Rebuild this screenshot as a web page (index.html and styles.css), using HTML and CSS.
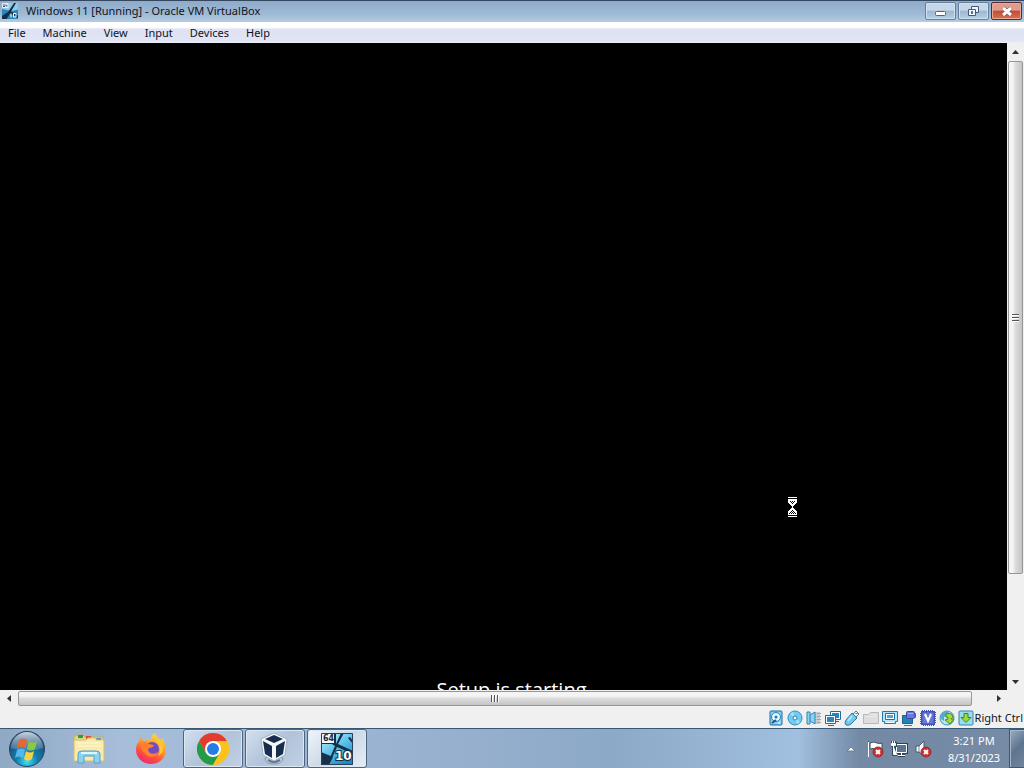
FILE: index.html
```html
<!DOCTYPE html>
<html lang="en">
<head>
    <meta charset="UTF-8">
    <meta name="viewport" content="width=device-width, initial-scale=1.0">
    <title>Windows 11 [Running] - Oracle VM VirtualBox</title>
    <link rel="stylesheet" href="styles.css">
</head>
<body>
    <header class="titlebar">
        <svg class="app-icon" viewBox="0 0 32 32">
            <rect width="32" height="32" fill="#2a87b8"/>
            <path d="M13 0h19v13L20 16 0 12V8z" fill="#8ccde9"/>
            <path d="M0 26 12 18 24 0h4L18 17l14 8v5L16 21 9 32H0z" fill="#172f45"/>
            <rect width="13" height="10" fill="#e8edf2"/>
            <path d="M2 4h4M2 7h4M8 3v3h3" stroke="#456" stroke-width="2" fill="none"/>
            <path d="M18 21v8M23 21h5v7h-5z" stroke="#fff" stroke-width="2" fill="none"/>
        </svg>
        <h1>Windows 11 [Running] - Oracle VM VirtualBox</h1>
        <div class="window-buttons">
            <button aria-label="Minimize">
                <svg width="30" height="16" viewBox="0 0 30 16"><rect x="9.500" y="8.500" width="10" height="4" rx="1" fill="#fff" stroke="#536580"/></svg>
            </button>
            <button aria-label="Restore">
                <svg width="30" height="16" viewBox="0 0 30 16"><g fill="#edf4fb" stroke="#465978"><path d="M12.500 3.500h7v6h-7z"/><path d="M9.500 6.500h7v6h-7z"/><path d="M12.500 8.500h1v2h-1z"/></g></svg>
            </button>
            <button class="close" aria-label="Close">
                <svg width="30" height="16" viewBox="0 0 30 16"><path d="m11 5 8 7m0-7-8 7" stroke="#643b40" stroke-width="4"/><path d="m11 5 8 7m0-7-8 7" stroke="#fff" stroke-width="3"/></svg>
            </button>
        </div>
    </header>

    <nav class="menubar">
        <button>File</button>
        <button>Machine</button>
        <button>View</button>
        <button>Input</button>
        <button>Devices</button>
        <button>Help</button>
    </nav>

    <main class="viewer">
        <div class="guest">
            <p class="guest-message">Setup is starting</p>
            <svg class="pointer" width="9" height="20" viewBox="0 0 9 20" shape-rendering="crispEdges">
                <path d="M0 0h9v1H0zM0 2h9v4H8v1H7v1H6v1H5v2h1v1h1v1h1v1h1v4H0v-4h1v-1h1v-1h1v-1h1V9H3V8H2V7H1V6H0zM0 19h9v1H0z" fill="#fff"/>
                <path d="M2 4h1v1H2zM4 4h1v1H4zM6 4h1v1H6zM3 5h1v1H3zM5 5h1v1H5zM4 6h1v1H4zM4 13h1v1H4zM3 14h1v1H3zM5 14h1v1H5zM2 15h1v1H2zM4 15h1v1H4zM6 15h1v1H6zM1 16h1v1H1zM3 16h1v1H3zM5 16h1v1H5zM7 16h1v1H7z"/>
            </svg>
        </div>
        <div class="scrollbar vertical">
            <button class="arrow" aria-label="Scroll up"><svg width="7" height="4" viewBox="0 0 7 4"><path d="M0 4 3.500 0 7 4z"/></svg></button>
            <div class="track">
                <div class="thumb"><span class="grip"></span></div>
            </div>
            <button class="arrow" aria-label="Scroll down"><svg width="7" height="4" viewBox="0 0 7 4"><path d="M0 0 3.500 4 7 0z"/></svg></button>
        </div>
        <div class="scrollbar horizontal">
            <button class="arrow" aria-label="Scroll left"><svg width="4" height="7" viewBox="0 0 4 7"><path d="M4 0 0 3.500 4 7z"/></svg></button>
            <div class="track">
                <div class="thumb"><span class="grip"></span></div>
            </div>
            <button class="arrow" aria-label="Scroll right"><svg width="4" height="7" viewBox="0 0 4 7"><path d="M0 0 4 3.500 0 7z"/></svg></button>
        </div>
    </main>

    <footer class="statusbar">
        <!-- hard disk -->
        <svg viewBox="0 0 16 16"><rect x="2" y="1" width="12" height="14" rx="1" fill="#8bd0f5" stroke="#176ea5"/><circle cx="8" cy="7" r="4.500" fill="#e7f8ff" stroke="#2586bd"/><circle cx="8" cy="7" r="1.500" fill="#1b79b5"/><path d="m4 13 4-3" stroke="#195d8a" stroke-width="2"/><path d="M10 13h2" stroke="#fff"/></svg>
        <!-- optical disc -->
        <svg viewBox="0 0 16 16"><circle cx="8" cy="8" r="7" fill="#72cbf3" stroke="#2e91be"/><path d="M8 8 3 4a7 7 0 0 1 3-2zM8 8l5 4a7 7 0 0 1-3 2z" fill="#a5e0f8"/><circle cx="8" cy="8" r="2" fill="#fff" stroke="#267eb0"/></svg>
        <!-- audio -->
        <svg viewBox="0 0 16 16"><path d="M9 2h5v12H9z" fill="#c6ccd1"/><path d="M11 3.500h4M11 6.500h4M11 9.500h4M11 12.500h4" stroke="#9ba8ae"/><path d="M1 2h3v3l5-3v12l-5-3v3H1z" fill="#8bd4f2" stroke="#3284ae"/><path d="M4 5v6" stroke="#267ba9"/></svg>
        <!-- network -->
        <svg viewBox="0 0 16 16"><path d="M5.500 1.500h10v8h-10z" fill="#fff" stroke="#236a99"/><path d="M7 3h7v5H7z" fill="#2388c5"/><path d="M9 11.500h5" stroke="#236a99"/><path d="M.5 5.500h10v8H.5z" fill="#fff" stroke="#236a99"/><path d="M2 7h7v5H2z" fill="#2388c5"/><path d="M3 15.500h6" stroke="#236a99"/></svg>
        <!-- usb -->
        <svg viewBox="0 0 16 16"><path d="m9 4 3-3 3 3-3 3z" fill="#eef5fa" stroke="#68798b"/><path d="m8 3 5 5-6 6q-2 2-5 1-2-2 0-5z" fill="#72c8ef" stroke="#287ba7"/><path d="m8 6-4 5" stroke="#b5e8fb" stroke-width="2"/><path d="M12 3v1m1-1v1" stroke="#456"/></svg>
        <!-- shared folders -->
        <svg viewBox="0 0 16 16"><path d="M.5 4.500h5l2-2h8v11H.5z" fill="#dedede" stroke="#b9b9b9"/><path d="M8 4.500h6M2 6.500h12" stroke="#e8e8e8"/></svg>
        <!-- display -->
        <svg viewBox="0 0 16 16"><path d="M.5 1.500h15v10h-2v2h-11v-2h-2z" fill="#b6e5fa" stroke="#257aa9"/><path d="M3.500 3.500h9v6h-9z" fill="#fff" stroke="#246d9c"/><path d="M5 5h6v3H5z" fill="#49a8df"/><path d="M4 12.500h8" stroke="#efffff"/></svg>
        <!-- recording -->
        <svg viewBox="0 0 16 16"><path d="M1.500 5.500h10v8h-10z" fill="#2382bd" stroke="#1e608d"/><path d="M3 15.500h8" stroke="#357ca9"/><rect x="5.500" y="1.500" width="8" height="7" rx="1" fill="#6978dc" stroke="#3c479c"/><path d="m13 4 2-1v5l-2-1z" fill="#4b5abd"/><path d="M7 3.500h5" stroke="#a3b1fa"/></svg>
        <!-- virtualization -->
        <svg viewBox="0 0 16 16"><path d="M2 1h12v14H2zM1 2h14v12H1z" fill="none" stroke="#4854b8" stroke-width="2" stroke-dasharray="1 1"/><rect x="2" y="2" width="12" height="12" fill="#6878dc" stroke="#4350aa"/><path d="m5 4 3 7 3-7" fill="none" stroke="#fff" stroke-width="2"/></svg>
        <!-- mouse integration -->
        <svg viewBox="0 0 16 16"><circle cx="8" cy="8" r="7" fill="#b9e6f1" stroke="#3794ba"/><path d="M2 5q4-6 8-3L8 6 5 7v4L2 9z" fill="#56aacd"/><path d="M7 4q6-2 7 3l-2 2h3l-4 5-5-4 3-1q1-2-2-2z" fill="#a5db31" stroke="#428c28"/></svg>
        <!-- keyboard -->
        <svg viewBox="0 0 16 16"><rect x="1" y="1" width="14" height="14" rx="1" fill="#9adcf0" stroke="#3287ab"/><path d="M6 3.500h4v4h3l-5 5-5-5h3z" fill="#9bdd38" stroke="#36882b"/></svg>
        <span>Right Ctrl</span>
    </footer>

    <div class="taskbar">
        <button class="start" aria-label="Start">
            <svg width="38" height="38" viewBox="0 0 38 38">
                <defs>
                    <radialGradient id="orb" cx="50%" cy="85%" r="75%"><stop offset="0" stop-color="#43e2f5"/><stop offset=".4" stop-color="#107fae"/><stop offset="1" stop-color="#24446b"/></radialGradient>
                    <linearGradient id="shine" x2="0" y2="1"><stop stop-color="#e4eef4" stop-opacity=".85"/><stop offset="1" stop-color="#a4c0d2" stop-opacity=".2"/></linearGradient>
                </defs>
                <circle cx="19" cy="19" r="17.500" fill="url(#orb)" stroke="#284662"/>
                <path d="M3 18a16 16 0 0 1 32 0q-16 6-32 0z" fill="url(#shine)"/>
                <path d="M11 10q4-3 8 0l-2 8q-4-3-8 0z" fill="#ed652a"/>
                <path d="M21 11q4 3 8 0l-2 8q-4 3-8 0z" fill="#8ec640"/>
                <path d="M9 20q4-3 8 0l-2 8q-4-3-8 0z" fill="#54b8ee"/>
                <path d="M18 21q4 3 8 0l-2 8q-4 3-8 0z" fill="#fad13e"/>
            </svg>
        </button>
        <button class="task" aria-label="Windows Explorer">
            <svg width="34" height="34" viewBox="0 0 34 34">
                <path d="M2 5 5 3h6l2 2h18v24H2z" fill="#e9d581" stroke="#c8ad57"/>
                <path d="M6 3h5v3H6z" fill="#2c9b4c"/><path d="M14 4h5v3h-5z" fill="#d65234"/><path d="M22 6h7v3h-7z" fill="#4b91ca"/>
                <path d="M2 8h12l2-2h8v2h8v21H2z" fill="#f7ebad" stroke="#d6bf6c"/>
                <path d="M5 11h24M5 14h24" stroke="#fff8d5"/>
                <path d="M6 31v-9q0-3 4-3h14q4 0 4 3v9h-6v-7H12v7z" fill="#8dd1f0" stroke="#549fc8"/>
                <path d="M9 21h16" stroke="#dcf7ff" stroke-width="2"/>
            </svg>
        </button>
        <button class="task" aria-label="Firefox">
            <svg width="32" height="32" viewBox="0 0 32 32">
                <defs><linearGradient id="fire" x1=".8" y1="0" x2=".3" y2="1"><stop stop-color="#ffe443"/><stop offset=".45" stop-color="#ff9825"/><stop offset=".75" stop-color="#ff4844"/><stop offset="1" stop-color="#e92c75"/></linearGradient></defs>
                <path d="M6 4q1 4 4 4 3-2 6-1-1-4 4-7 1 4 6 7l1-2q4 7 4 12a15 14 0 0 1-30 0q0-6 3-8 0-3 2-5z" fill="url(#fire)"/>
                <circle cx="17" cy="16" r="7" fill="#704bc6"/>
                <path d="M7 9q5-1 7 2l5 1q-1 3-5 3-2 2 1 5 4 2 8-1-4 8-12 3-6-5-4-13z" fill="#ff812b"/>
                <path d="M15 7q9-1 10 9 0 4-2 7 6-3 5-10-3-7-13-6z" fill="#ffc638"/>
            </svg>
        </button>
        <button class="task open" aria-label="Google Chrome">
            <svg width="32" height="32" viewBox="0 0 32 32">
                <circle cx="16" cy="16" r="16" fill="#fbc21c"/>
                <path d="M2.140 8A16 16 0 0 1 29.860 8H16L9.070 20z" fill="#e33b2e"/>
                <path d="M2.140 8A16 16 0 0 0 16 32l6.930-12-13.860 0z" fill="#249b49"/>
                <path d="M16 8h13.860A16 16 0 0 1 16 32l6.930-12z" fill="#fbc21c"/>
                <circle cx="16" cy="16" r="8" fill="#fff"/><circle cx="16" cy="16" r="6" fill="#267de5"/>
            </svg>
        </button>
        <button class="task open" aria-label="Oracle VM VirtualBox">
            <svg width="32" height="32" viewBox="0 0 32 32">
                <path d="M6 25q0 6 9 6t9-6l-9-2z" fill="#bac9dd" stroke="#8798b1"/>
                <path d="M9 27q6 4 12 0" fill="none" stroke="#62728c" stroke-width="2"/>
                <path d="M15 0 28 6l-2 16-11 6-11-6L2 6z" fill="#f4f8fb" stroke="#a1b0c5"/>
                <path d="m15 2 9 4-9 4-9-4zM4 8l9 5v12l-7-4zM26 8l-9 5v12l7-4z" fill="#172e50"/>
            </svg>
        </button>
        <button class="task open active" aria-label="Windows 11 [Running]">
            <svg width="32" height="32" viewBox="0 0 32 32">
                <defs><linearGradient id="vm" x2=".7" y2="1"><stop stop-color="#d7f5ff"/><stop offset=".5" stop-color="#62c6ee"/><stop offset="1" stop-color="#168bc8"/></linearGradient></defs>
                <rect width="32" height="32" fill="url(#vm)"/>
                <path d="M0 19 12 24 8 32H0zM20 0h3l-6 11 15 7v3l-16-7-8 18H6l8-19-3-2h4zM27 5l5 6V8l-3-4z" fill="#173047"/>
                <path d="M1 10h13V1" fill="none" stroke="#173047" stroke-width="2"/>
                <rect x="1" y="1" width="12" height="9" fill="#f5f7f8"/>
                <path d="M.5.500h31v31H.5z" fill="none" stroke="#294157"/>
                <text class="icon-bits" x="2" y="8">64</text>
                <text class="icon-version" x="14" y="27">10</text>
            </svg>
        </button>

        <div class="tray">
            <button aria-label="Show hidden icons"><svg viewBox="0 0 18 18"><path d="m4 11 4-4 4 4z" fill="#fff" stroke="#6c8096"/></svg></button>
            <button aria-label="Action Center"><svg viewBox="0 0 18 18"><path d="M1.500 1v16M3 3q4-2 7 0 3 1 5 0v7q-4 1-6-1-3-1-6 0z" fill="#fff" stroke="#3d4f63"/><path d="M1.500 2v15" stroke="#fff"/><circle cx="11" cy="12" r="5" fill="#ce2d2c" stroke="#8f3334"/><path d="m9 10 4 4m0-4-4 4" stroke="#fff" stroke-width="2"/></svg></button>
            <button aria-label="Network"><svg viewBox="0 0 18 18"><path d="M5.500 4.500h10v8h-10zM10.500 13v3M7 15.500h7" fill="#5f748c" stroke="#2e4256" stroke-width="3"/><path d="M5.500 4.500h10v8h-10zM10.500 13v3M7 15.500h7" fill="#5f748c" stroke="#fff"/><path d="M2.500 6v8.500H6M.5 3.500h4v2h-4zM1.500 1v2m2-2v2" fill="none" stroke="#354b60" stroke-width="3"/><path d="M2.500 6v8.500H6M.5 3.500h4v2h-4zM1.500 1v2m2-2v2" fill="#fff" stroke="#fff"/></svg></button>
            <button aria-label="Volume"><svg viewBox="0 0 18 18"><path d="M1 6h3l5-5v15l-5-4H1z" fill="#fff" stroke="#465b71"/><path d="M4 6v6" stroke="#718398"/><circle cx="11" cy="12" r="5" fill="#ce2d2c" stroke="#8f3334"/><path d="m9 10 4 4m0-4-4 4" stroke="#fff" stroke-width="2"/></svg></button>
        </div>
        <div class="clock">
            <time>3:21 PM</time>
            <time datetime="2023-08-31">8/31/2023</time>
        </div>
        <button class="show-desktop" aria-label="Show desktop"></button>
    </div>
</body>
</html>
```
FILE: styles.css
```css
* {
    box-sizing: border-box;
}
body {
    display: flex;
    flex-direction: column;
    height: 100vh;
    margin: 0;
    overflow: hidden;
    font-family: "Noto Sans", "Open Sans", sans-serif;
    font-size: 11px;
    color: #10131c;
    background: #f0f0f0;
}
button {
    padding: 0;
    border: none;
    background: none;
    font: inherit;
    color: inherit;
}
svg {
    display: block;
}

/* window frame */
.titlebar {
    display: flex;
    align-items: center;
    height: 22px;
    padding: 0 2px 2px;
    border-top: 1px solid #33485f;
    background: linear-gradient(#8fabc9, #9db9d6 60%, #b4cce3);
}
.app-icon {
    width: 16px;
    height: 16px;
}
.titlebar h1 {
    flex: 1;
    margin: 0 0 0 8px;
    font-size: 11px;
    font-weight: normal;
}
.window-buttons {
    display: flex;
    gap: 2px;
}
.window-buttons button {
    width: 31px;
    height: 18px;
    border: 1px solid #657f9f;
    border-radius: 2px;
    background: linear-gradient(#c5d7e9 45%, #9db7d2 50%, #b8d0e6);
    box-shadow: inset 0 0 0 1px #d0e0ef;
}
.window-buttons .close {
    border-color: #562b35;
    background: linear-gradient(#df9c8e 45%, #c34b34 50%, #d77352);
    box-shadow: inset 0 0 0 1px #e7aa9b;
}
.menubar {
    display: flex;
    gap: 17px;
    height: 21px;
    padding: 0 8px;
    background: linear-gradient(#fff 25%, #dfe2f3 35%, #e0e4f4 90%, #f0f0f5);
}

/* guest screen and its scrollbars */
.viewer {
    display: grid;
    grid-template-columns: minmax(0, 1fr) 17px;
    grid-template-rows: minmax(0, 1fr) 17px;
    flex: 1;
    min-height: 0;
}
.guest {
    position: relative;
    display: flex;
    align-items: flex-end;
    justify-content: center;
    padding-left: 16px;
    overflow: hidden;
    background: #000;
}
.guest-message {
    height: 10px;
    margin: 0;
    font-family: "Open Sans", sans-serif;
    font-size: 20px;
    line-height: 20px;
    color: #fff;
}
.pointer {
    position: absolute;
    top: 454px;
    left: 788px;
}
.scrollbar {
    display: flex;
    background: #f0f0f0;
}
.vertical {
    flex-direction: column;
}
.arrow {
    display: flex;
    flex: 0 0 17px;
    align-items: center;
    justify-content: center;
    fill: #303030;
}
.track {
    flex: 1;
    padding: 1px;
}
.thumb {
    display: flex;
    align-items: center;
    justify-content: center;
    border: 1px solid #979797;
    border-radius: 2px;
}
.vertical .thumb {
    height: 84%;
    background: linear-gradient(90deg, #f4f4f4 30%, #dcdcdc 50%, #c4c4c4);
}
.horizontal .thumb {
    width: calc(100% - 17px);
    height: 15px;
    background: linear-gradient(#f4f4f4 30%, #dcdcdc 50%, #c4c4c4);
}
.grip {
    width: 7px;
    height: 8px;
    background: repeating-linear-gradient(#555 0 1px, #fff 1px 2px, transparent 2px 3px);
}
.horizontal .grip {
    width: 8px;
    height: 7px;
    background: repeating-linear-gradient(90deg, #555 0 1px, #fff 1px 2px, transparent 2px 3px);
}
.statusbar {
    display: flex;
    align-items: center;
    justify-content: flex-end;
    gap: 3px;
    height: 21px;
    padding-right: 1px;
}
.statusbar svg {
    width: 16px;
    height: 16px;
}
.statusbar span {
    margin-left: -2px;
}

/* taskbar */
.taskbar {
    display: flex;
    gap: 2px;
    height: 40px;
    border-top: 1px solid #385775;
    background: linear-gradient(90deg, #8fa8c3, #a7bedb 12%, #9cb4d1 35%, #8da9c8 60%, #a1bfdf 78%, #7389a4 84%, #768ba5);
}
.start,
.task {
    display: flex;
    align-items: center;
    justify-content: center;
}
.start {
    width: 57px;
    padding-right: 3px;
}
.task {
    width: 60px;
}
.task.open {
    border: 1px solid #4e657f;
    border-radius: 3px;
    background: linear-gradient(135deg, #d3e0ee, #b1c3da 50%, #c0d0e4);
    box-shadow: inset 0 0 0 1px #dce7f2;
}
.task.active {
    background: linear-gradient(135deg, #f1f6fb, #cbd8e7 50%, #e5edf6);
}
.icon-bits {
    font: bold 8px "DejaVu Sans", sans-serif;
    fill: #182c40;
}
.icon-version {
    font: bold 12px "DejaVu Sans", sans-serif;
    fill: #fff;
    stroke: #173047;
    stroke-width: 2px;
    paint-order: stroke;
}
.tray {
    display: flex;
    align-items: center;
    gap: 6px;
    margin-left: auto;
}
.tray svg {
    width: 18px;
    height: 18px;
}
.clock {
    display: flex;
    flex-direction: column;
    align-items: center;
    justify-content: center;
    width: 72px;
    padding: 1px 0 0 6px;
    line-height: 17px;
    color: #fff;
}
.show-desktop {
    width: 15px;
    border: 1px solid #43566d;
    border-right: none;
    background: linear-gradient(135deg, #9badc1, #5e7590 50%, #71869e);
    box-shadow: inset 1px 1px #a6b7ca;
}
```
